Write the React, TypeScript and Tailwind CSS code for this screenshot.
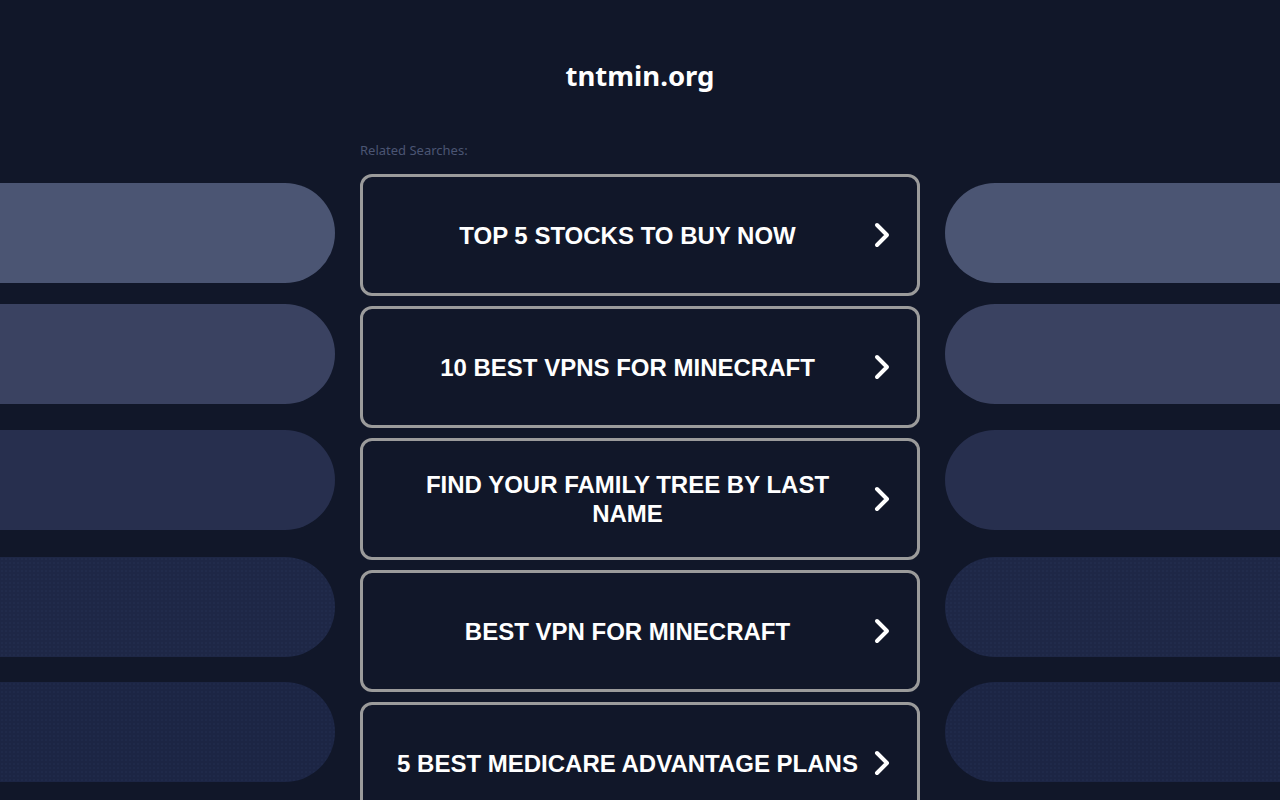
import React from "react";

const items = [
  "TOP 5 STOCKS TO BUY NOW",
  "10 BEST VPNS FOR MINECRAFT",
  "FIND YOUR FAMILY TREE BY LAST NAME",
  "BEST VPN FOR MINECRAFT",
  "5 BEST MEDICARE ADVANTAGE PLANS",
];

function Chevron() {
  return (
    <svg width="18" height="28" viewBox="0 0 18 28" className="shrink-0 ml-[8px]">
      <path d="M4 4 L14 14 L4 24" fill="none" stroke="#ffffff" strokeWidth="4" strokeLinecap="round" strokeLinejoin="round" />
    </svg>
  );
}

const dots =
  "bg-[radial-gradient(circle,rgba(50,62,100,0.35)_0.6px,transparent_0.8px)] bg-[length:4px_4px]";

function Pills({ side }: { side: "left" | "right" }) {
  const r = side === "left" ? "rounded-r-full" : "rounded-l-full";
  return (
    <div className="w-[335px] shrink-0 flex flex-col pt-[43px]">
      <div className={`h-[100px] bg-[#4b5573] ${r}`} />
      <div className={`h-[100px] mt-[21px] bg-[#3a4261] ${r}`} />
      <div className={`h-[100px] mt-[26px] bg-[#272f4e] ${r}`} />
      <div className={`h-[100px] mt-[27px] bg-[#1e2746] ${r} ${dots}`} />
      <div className={`h-[100px] mt-[25px] bg-[#1c2544] ${r} ${dots}`} />
    </div>
  );
}

export default function App() {
  return (
    <div className="w-[1280px] h-[800px] overflow-hidden bg-[#111729]">
      <div className="h-[140px] pt-[56px] text-center">
        <h1 className="text-[27.5px] leading-[40px] font-bold text-white font-['Noto_Sans',sans-serif]">
          tntmin.org
        </h1>
      </div>
      <div className="flex justify-between">
        <Pills side="left" />
        <div className="w-[560px] shrink-0 flex flex-col">
          <div className="h-[34px] pt-[2px] text-[13px] leading-[16px] text-[#4b5573] font-['Noto_Sans',sans-serif]">
            Related Searches:
          </div>
          <div className="flex flex-col gap-[10px]">
            {items.map((t) => (
              <div
                key={t}
                className="h-[122px] border-[3px] border-[#9b9b9b] rounded-[12px] flex items-center pl-[27px] pr-[26px]"
              >
                <span className="flex-1 text-center text-white font-bold text-[24px] leading-[29px] font-['Liberation_Sans',Arial,sans-serif]">
                  {t}
                </span>
                <Chevron />
              </div>
            ))}
          </div>
        </div>
        <Pills side="right" />
      </div>
    </div>
  );
}
